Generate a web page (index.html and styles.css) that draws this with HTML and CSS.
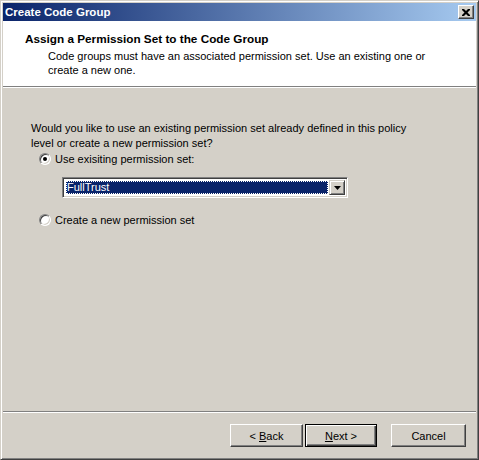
FILE: index.html
```html
<!DOCTYPE html>
<html lang="en">
<head>
    <meta charset="UTF-8">
    <title>Create Code Group</title>
    <link rel="stylesheet" href="styles.css">
</head>
<body>
    <div class="window">
        <div class="titlebar">
            <span class="title">Create Code Group</span>
            <span class="close-btn">
                <svg width="8" height="7" viewBox="0 0 8 7">
                    <path d="M0 0h2l2 2 2-2h2v1l-2.5 2.5L8 6v1H6L4 5 2 7H0V6l2.5-2.5L0 1z" fill="#000"/>
                </svg>
            </span>
        </div>

        <div class="header">
            <div class="heading">Assign a Permission Set to the Code Group</div>
            <div class="subtext">Code groups must have an associated permission set. Use an existing one or create a new one.</div>
        </div>

        <div class="main">
            <p class="question">Would you like to use an existing permission set already defined in this policy level or create a new permission set?</p>

            <div class="option">
                <span class="radio checked"></span>
                <span class="option-label">Use exisiting permission set:</span>
            </div>

            <div class="combo">
                <div class="combo-field">
                    <span class="combo-value">FullTrust</span>
                </div>
                <span class="combo-arrow">
                    <svg width="7" height="4" viewBox="0 0 7 4"><path d="M0 0h7L3.5 4z" fill="#000"/></svg>
                </span>
            </div>

            <div class="option last">
                <span class="radio"></span>
                <span class="option-label">Create a new permission set</span>
            </div>
        </div>

        <div class="footer">
            <button class="btn"><span>&lt; <u>B</u>ack</span></button>
            <button class="btn default"><span><u>N</u>ext &gt;</span></button>
            <button class="btn cancel"><span>Cancel</span></button>
        </div>
    </div>
</body>
</html>
```

FILE: styles.css
```css
body {
    margin: 0;
    padding: 0;
    font-family: 'Liberation Sans', Arial, sans-serif;
    font-size: 11px;
    color: #000;
}

.window {
    width: 479px;
    height: 460px;
    box-sizing: border-box;
    background-color: #d4d0c8;
    border: 1px solid;
    border-color: #d4d0c8 #404040 #404040 #d4d0c8;
    box-shadow: inset 1px 1px #fff, inset -1px -1px #808080;
    padding: 2px;
    display: flex;
    flex-direction: column;
}

.titlebar {
    height: 18px;
    display: flex;
    align-items: center;
    justify-content: space-between;
    padding: 0 2px;
    background: linear-gradient(to right, #0a246a, #a6caf0);
}

.title {
    color: #fff;
    font-weight: bold;
    font-size: 11.5px;
}

.close-btn {
    width: 16px;
    height: 14px;
    box-sizing: border-box;
    background-color: #d4d0c8;
    border: 1px solid;
    border-color: #fff #404040 #404040 #fff;
    box-shadow: inset -1px -1px #808080;
    display: flex;
    align-items: center;
    justify-content: center;
}

.header {
    height: 66px;
    background-color: #fff;
    border-bottom: 1px solid #808080;
    box-shadow: 0 1px #fff;
    padding: 11px 0 0 22px;
    box-sizing: border-box;
    line-height: 14px;
}

.heading {
    font-weight: bold;
    font-size: 11.75px;
    margin-bottom: 3px;
}

.subtext {
    padding-left: 23px;
    width: 390px;
}

.main {
    flex: 1;
    margin-top: 1px;
    padding: 33px 0 0 28px;
}

.question {
    margin: 0;
    line-height: 15px;
    width: 390px;
}

.option {
    display: flex;
    align-items: center;
    margin-top: 1px;
    margin-left: 8px;
    height: 14px;
}

.option.last {
    margin-top: 15px;
}

.radio {
    width: 12px;
    height: 12px;
    box-sizing: border-box;
    border-radius: 50%;
    border: 1px solid;
    border-color: #808080 #fff #fff #808080;
    box-shadow: inset 1px 1px #404040, inset -1px -1px #d4d0c8;
    background-color: #fff;
    position: relative;
    margin-right: 4px;
}

.radio.checked::after {
    content: "";
    position: absolute;
    left: 3px;
    top: 3px;
    width: 4px;
    height: 4px;
    border-radius: 50%;
    background-color: #000;
}

.combo {
    width: 286px;
    height: 21px;
    box-sizing: border-box;
    margin: 11px 0 0 31px;
    background-color: #fff;
    border: 1px solid;
    border-color: #808080 #fff #fff #808080;
    box-shadow: inset 1px 1px #404040, inset -1px -1px #d4d0c8;
    padding: 2px;
    display: flex;
}

.combo-field {
    flex: 1;
    padding: 1px;
    display: flex;
}

.combo-value {
    flex: 1;
    background-color: #0a246a;
    color: #fff;
    outline: 1px dotted #fff;
    outline-offset: -1px;
    line-height: 13px;
    padding-left: 1px;
}

.combo-arrow {
    width: 16px;
    box-sizing: border-box;
    background-color: #d4d0c8;
    border: 1px solid;
    border-color: #d4d0c8 #404040 #404040 #d4d0c8;
    box-shadow: inset 1px 1px #fff, inset -1px -1px #808080;
    display: flex;
    align-items: center;
    justify-content: center;
}

.footer {
    border-top: 1px solid #808080;
    box-shadow: inset 0 1px #fff;
    padding: 12px 10px 10px 0;
    display: flex;
    justify-content: flex-end;
}

.btn {
    width: 73px;
    height: 23px;
    box-sizing: border-box;
    margin: 0 0 0 2px;
    padding: 0;
    font: inherit;
    color: #000;
    background-color: #d4d0c8;
    border: 1px solid;
    border-color: #fff #404040 #404040 #fff;
    box-shadow: inset -1px -1px #808080;
}

.btn.default {
    width: 72px;
    border: 1px solid #000;
    box-shadow: inset 1px 1px #fff, inset -1px -1px #404040, inset -2px -2px #808080;
}

.btn.cancel {
    width: 75px;
    margin-left: 14px;
}
```
